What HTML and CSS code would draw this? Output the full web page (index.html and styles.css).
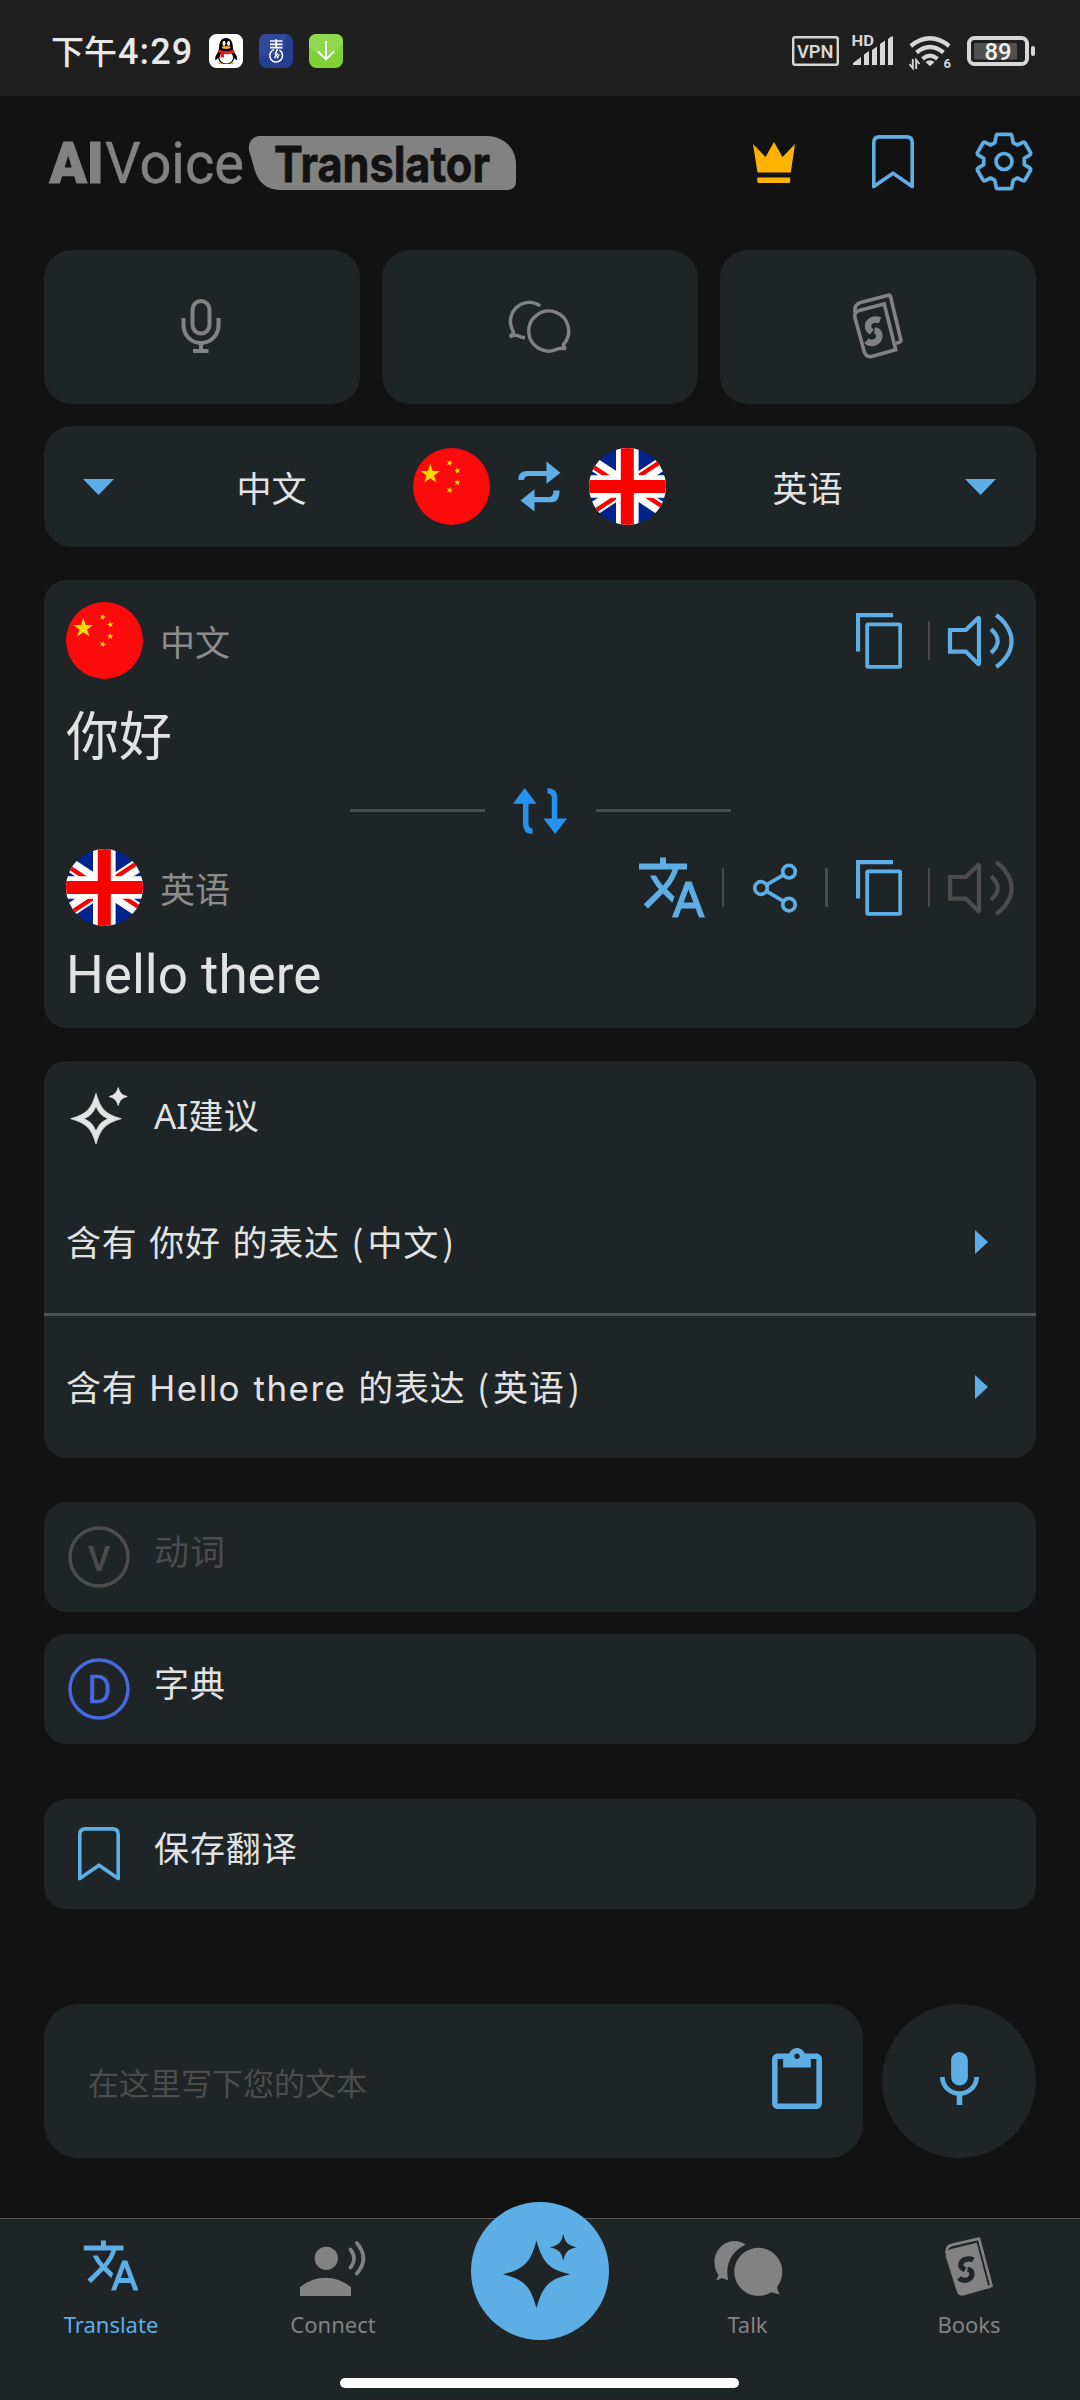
FILE: index.html
```html
<!DOCTYPE html>
<html lang="zh-CN">
<head>
<meta charset="utf-8">
<title>AI Voice Translator</title>
<link rel="stylesheet" href="styles.css">
</head>
<body>
<svg class="defs" width="0" height="0">
  <defs>
    <clipPath id="round"><circle cx="38.5" cy="38.5" r="38.5"/></clipPath>
    <polygon id="star" points="0,-10 2.25,-3.09 9.51,-3.09 3.63,1.18 5.88,8.09 0,3.82 -5.88,8.09 -3.63,1.18 -9.51,-3.09 -2.25,-3.09"/>
    <symbol id="flag-cn" viewBox="0 0 77 77">
      <circle cx="38.5" cy="38.5" r="38.5" fill="#fb0b0b"/>
      <g fill="#ffdc00">
        <use href="#star" transform="translate(17.3 26.2) scale(1.04)"/>
        <use href="#star" transform="translate(36.7 15) rotate(20) scale(.34)"/>
        <use href="#star" transform="translate(44.3 22.6) rotate(-10) scale(.34)"/>
        <use href="#star" transform="translate(44.2 34.4) scale(.34)"/>
        <use href="#star" transform="translate(36.7 42.2) rotate(20) scale(.34)"/>
      </g>
    </symbol>
    <symbol id="flag-uk" viewBox="0 0 77 77">
      <g clip-path="url(#round)" fill="none">
        <rect width="77" height="77" fill="#00248c"/>
        <path d="M-10 6.5L87 70.5M-10 70.5L87 6.5" stroke="#fff" stroke-width="13.7"/>
        <path d="M-10 9.5L38.5 41.5M38.5 35.5L87 67.5M38.5 35.5L87 3.5M-10 73.5L38.5 41.5" stroke="#fa0000" stroke-width="4.4"/>
        <path d="M38.3 0V77M0 38.5H77" stroke="#fff" stroke-width="22.6"/>
        <path d="M38.3 0V77M0 38.5H77" stroke="#fa0000" stroke-width="13"/>
      </g>
    </symbol>
    <symbol id="copy" viewBox="856 613 46 56">
      <path d="M893 615.2H858V651.5" fill="none" stroke="currentColor" stroke-width="4.2"/>
      <rect x="867.2" y="624.3" width="33" height="42.6" rx=".8" fill="none" stroke="currentColor" stroke-width="3.8"/>
    </symbol>
    <symbol id="speaker" viewBox="947 612 68 58">
      <path d="M950 630H965.8L978 618.2Q979 617.5 979 619V663Q979 664.6 978 663.8L965.8 651.6H950Z" fill="none" stroke="currentColor" stroke-width="4.2"/>
      <path d="M991 629.2Q1004.5 641 991 652.8M996.2 615Q1007 623 1010.5 634Q1014 647 1005.5 658Q1001.5 663.5 996.2 667" fill="none" stroke="currentColor" stroke-width="4.2"/>
    </symbol>
    <symbol id="bookmark" viewBox="872 135 42 54">
      <path d="M873.8 186.6V142.5Q873.8 136.9 879.5 136.9H906.5Q912.2 136.9 912.2 142.5V186.6L893 173.2Z" fill="none" stroke="currentColor" stroke-width="3.6" stroke-linejoin="round"/>
    </symbol>
    <symbol id="translate" viewBox="1 2 22 20">
      <path fill="currentColor" d="M12.87 15.07l-2.54-2.51.03-.03c1.74-1.94 2.98-4.17 3.71-6.53H17V4h-7V2H8v2H1v1.99h11.17C11.5 7.92 10.44 9.75 9 11.35 8.07 10.32 7.3 9.19 6.69 8h-2c.73 1.63 1.73 3.17 2.98 4.56l-5.09 5.02L4 19l5-5 3.11 3.11.76-2.04zM18.5 10h-2L12 22h2l1.12-3h4.75L21 22h2l-4.5-12zm-2.62 7l1.62-4.33L19.12 17h-3.24z"/>
    </symbol>
  </defs>
</svg>

<div class="screen">
  <div class="status">
    <div class="time"><span class="time-cn">下午</span><span class="time-num">4:29</span></div>
    <svg class="app" viewBox="0 0 34 34">
      <rect width="34" height="34" rx="7.5" fill="#fff"/>
      <path d="M9 29.5Q11 27 17 27Q24 27 25 29.5Q24 31 17.5 29.5Q11 31 9 29.5Z" fill="#f5a81c"/>
      <path d="M10 17Q9.5 4 17 4Q24.5 4 24 17Q29 22 28 26Q27 26.5 25.5 24Q24 30 17 30Q10.5 30 9 24Q7.5 26.5 6.3 26Q5.5 22 10 17Z"/>
      <ellipse cx="17.3" cy="23.5" rx="6.8" ry="6" fill="#fff"/>
      <path d="M9.5 15.5Q17 19 25 15.5L25.5 18.5Q20 20.8 15 20V23.5H11.5V19L8.8 18Z" fill="#e02020"/>
      <ellipse cx="15" cy="9.5" rx="1.5" ry="2.4" fill="#fff"/><ellipse cx="19.6" cy="9.5" rx="1.5" ry="2.4" fill="#fff"/>
      <ellipse cx="17.2" cy="13.5" rx="4.5" ry="1.4" fill="#f5a81c"/>
    </svg>
    <svg class="app" viewBox="0 0 34 34">
      <rect width="34" height="34" rx="7.5" fill="#263f8f"/>
      <path d="M0 21V7.5Q0 0 7.5 0H27L24 22Z" fill="#304a9a"/>
      <path d="M11 7H23.5M11 10.3H23.5M11 13.6H23.5M17.2 5.3V14.5" stroke="#fff" stroke-width="1.7"/>
      <path d="M15 15.6A6.4 6.4 0 1 0 20.5 16.2M18.5 15L16 20.5M15.5 24L18.5 19.5M18 24.5L20 20.5" fill="none" stroke="#fff" stroke-width="1.5"/>
    </svg>
    <svg class="app" viewBox="0 0 34 34">
      <rect width="34" height="34" rx="7.5" fill="#7fd135"/>
      <path d="M0 14L17 25L34 11V7.5Q34 0 26.5 0H7.5Q0 0 0 7.5Z" fill="#90d850"/>
      <path d="M17 7V25M9 17.5L17 25.5L25 17.5" fill="none" stroke="#fff" stroke-width="1.9"/>
    </svg>
    <div class="system">
      <svg width="49" height="36" viewBox="791 33 49 36">
        <rect x="793.2" y="37.2" width="44.6" height="27.6" rx="2" fill="none" stroke="#d6d6d6" stroke-width="2.4"/>
        <text x="797" y="57.8" textLength="36.5" lengthAdjust="spacingAndGlyphs" class="vpn">VPN</text>
      </svg>
      <svg class="signal" width="43" height="36" viewBox="851 33 43 36" fill="#d6d6d6">
        <text x="851.5" y="46" textLength="22.5" lengthAdjust="spacingAndGlyphs" class="hd">HD</text>
        <path d="M853 65V63L861 57V65ZM864 65V54.5L869 51V65ZM872 65V50L877 46.5V65ZM880 65V44L885 40.5V65ZM888 65V39L891 36.5H893V65Z"/>
      </svg>
      <svg class="wifi" width="44" height="36" viewBox="908 33 44 36">
        <path d="M910.8 46Q930 30.5 949.2 46M916.5 52.5Q930 41.5 943.5 52.5M922.5 58.8Q930 52.5 937.5 58.8" fill="none" stroke="#d6d6d6" stroke-width="4.2"/>
        <path d="M925.5 62Q930 58.5 934.5 62L930 66.2Z" fill="#d6d6d6"/>
        <path d="M912.8 59V68L909.5 64M916.2 69V60L919.5 64" fill="none" stroke="#d6d6d6" stroke-width="1.9"/>
        <text x="943.5" y="68" class="six">6</text>
      </svg>
      <svg class="battery" width="70" height="36" viewBox="966 33 70 36">
        <rect x="969" y="38" width="58" height="26" rx="5.5" fill="none" stroke="#d6d6d6" stroke-width="4"/>
        <rect x="974" y="43" width="43" height="16.5" rx="1.5" fill="#505050"/>
        <rect x="1031" y="46" width="4" height="10" rx="2" fill="#d6d6d6"/>
        <text x="984.5" y="60" textLength="27" lengthAdjust="spacingAndGlyphs" class="pct">89</text>
      </svg>
    </div>
  </div>

  <header class="header">
    <svg class="logo" width="470" height="58" viewBox="48 133 470 58">
      <text x="49.5" y="183.3" textLength="54" lengthAdjust="spacingAndGlyphs" class="logo-ai">AI</text>
      <text x="105" y="183.3" textLength="139" lengthAdjust="spacingAndGlyphs" class="logo-voice">Voice</text>
      <path d="M260 136H487C503 136 516 148 516 164V181Q516 190 507 190H280C266 190 258 181 255 171L249.2 151C247.5 143 252 136 260 136Z" fill="#828282"/>
      <text x="274" y="181.7" textLength="216" lengthAdjust="spacingAndGlyphs" class="logo-tr">Translator</text>
    </svg>
    <div class="actions">
      <svg width="42" height="41" viewBox="753 141 42 41"><path d="M753 143L765.5 156L774 141L782.5 156L795 143L790.8 171.5H757.5ZM757.3 176.5H790.2V180.5Q790.2 182 788.7 182H758.8Q757.3 182 757.3 180.5Z" fill="#ffb300"/></svg>
      <svg class="act-mark" width="42" height="54"><use href="#bookmark"/></svg>
      <svg class="act-gear" width="58" height="60" viewBox="-29 -29.5 58 60" fill="none" stroke="currentColor" stroke-width="3.7" stroke-linejoin="round">
        <path d="M-6.5 -27.2H6.5Q7.7 -27.2 8 -25L9.3 -18.6L13.5 -16.5L19.3 -19.3Q20.3 -19.6 21 -18.5L26.5 -8.8Q27 -7.5 26 -6.7L20.3 -3.2V3.2L26 6.7Q27 7.5 26.5 8.8L21 18.5Q20.3 19.6 19.3 19.3L13.5 16.5L9.3 18.6L8 25Q7.7 27.2 6.5 27.2H-6.5Q-7.7 27.2 -8 25L-9.3 18.6L-13.5 16.5L-19.3 19.3Q-20.3 19.6 -21 18.5L-26.5 8.8Q-27 7.5 -26 6.7L-20.3 3.2V-3.2L-26 -6.7Q-27 -7.5 -26.5 -8.8L-21 -18.5Q-20.3 -19.6 -19.3 -19.3L-13.5 -16.5L-9.3 -18.6L-8 -25Q-7.7 -27.2 -6.5 -27.2Z"/>
        <circle r="8"/>
      </svg>
    </div>
  </header>

  <main class="main">
    <div class="tiles">
      <div class="tile">
        <svg width="40" height="56" viewBox="181.5 298 40 56" fill="none" stroke="currentColor" stroke-width="4"><rect x="193" y="301" width="17" height="32.5" rx="8.5"/><path d="M184 318V325.5A17.5 17.5 0 0 0 219 325.5V318M201.5 343V351"/><path d="M193.5 351H209"/></svg>
      </div>
      <div class="tile">
        <svg width="64" height="58" viewBox="508 298.5 64 58" fill="none" stroke="currentColor" stroke-width="3.4"><path d="M541.3 307.3A19 19 0 0 0 513.5 331.5Q514.8 332.6 514 334.5L511 338.5Q516 335.5 519 337.3Q522 339 526 339.3"/><path d="M564.5 346A20 20 0 1 0 558.5 350.5Q562 349.2 566.8 350.3Q564.3 348.5 564.5 346Z"/></svg>
      </div>
      <div class="tile">
        <svg width="52" height="68" viewBox="852 292.5 52 68" fill="none" stroke="currentColor" stroke-width="3.6"><path d="M861 310.7L885.3 304.5L896.7 350.2L873.5 356.8Q867.5 358.5 865.3 352.5L855.8 317.5Q855 312.3 861 310.7Z"/><path d="M855.8 313Q855 304.5 862.5 302.8L889.5 295.7Q891 295.3 891.5 297L902 341Q902.3 342.5 897 343.8"/><path d="M881 320.7C875 318.5 868.5 321.5 869 327.5C869.2 330.5 871.5 331.3 873 332.5M875.5 331C881 331.5 881.5 337.5 878.5 341C875.5 344.3 870.5 344.2 867.5 341.2" stroke-width="6.4"/></svg>
      </div>
    </div>

    <div class="langs">
      <svg class="caret" width="31" height="16" viewBox="0 0 31 16"><path d="M0 0H31L15.5 16Z" fill="currentColor"/></svg>
      <div class="lang lang-from">中文</div>
      <svg class="flag"><use href="#flag-cn"/></svg>
      <svg class="swap" width="43" height="51" viewBox="517.5 461 43 51"><path d="M546 461.5L560 472.7L546 483.7V476H528Q524 476 523.5 480H518Q517.5 471 526.5 471H546ZM534 489.2L520 500.5L534 511.5V502.3H550.5Q559.5 502.3 559 490.5H553Q553 497 549 497H534Z" fill="currentColor"/></svg>
      <svg class="flag"><use href="#flag-uk"/></svg>
      <div class="lang lang-to">英语</div>
      <svg class="caret" width="31" height="16" viewBox="0 0 31 16"><path d="M0 0H31L15.5 16Z" fill="currentColor"/></svg>
    </div>

    <section class="card result">
      <div class="side">
        <svg class="flag"><use href="#flag-cn"/></svg>
        <span class="side-name">中文</span>
        <div class="tools">
          <svg width="46" height="56"><use href="#copy"/></svg>
          <i class="sep"></i>
          <svg class="spk" width="68" height="58"><use href="#speaker"/></svg>
        </div>
      </div>
      <p class="phrase phrase-cn">你好</p>
      <div class="flip">
        <hr class="rule">
        <svg width="54" height="46" viewBox="513.5 788 54 46" fill="#2492ee"><path d="M525.2 788L537 803.7H529V824Q529 828.3 533 828.5V834Q523.5 834 523.5 824V803.7H513.5ZM555.8 834L543.8 818.5H552.3V798Q552.3 793.7 548 793.5V788Q557.8 788 557.8 798V818.5H567.5Z"/></svg>
        <hr class="rule">
      </div>
      <div class="side">
        <svg class="flag"><use href="#flag-uk"/></svg>
        <span class="side-name">英语</span>
        <div class="tools">
          <svg class="tr" width="66" height="61"><use href="#translate"/></svg>
          <i class="sep"></i>
          <svg class="share" width="46" height="52" viewBox="752 861.7 46 52" fill="none" stroke="currentColor" stroke-width="3.7"><circle cx="761" cy="887.7" r="6.3"/><circle cx="789" cy="871.4" r="6.3"/><circle cx="789" cy="904.3" r="6.3"/><path d="M766.4 884.5L783.6 874.6M766.4 890.9L783.6 901.1"/></svg>
          <i class="sep"></i>
          <svg width="46" height="56"><use href="#copy"/></svg>
          <i class="sep"></i>
          <svg class="spk off" width="68" height="58"><use href="#speaker"/></svg>
        </div>
      </div>
      <p class="phrase phrase-en">Hello there</p>
    </section>

    <section class="card ideas">
      <div class="ideas-head">
        <svg width="58" height="58" viewBox="70 1087 58 58" fill="#e4e4e4"><path transform="translate(96 1118.7)" fill-rule="evenodd" d="M0 -25.3C4.5 -10 9 -4.5 25.3 0C9 4.5 4.5 10 0 25.3C-4.5 10 -9 4.5 -25.3 0C-9 -4.5 -4.5 -10 0 -25.3ZM0 -12.5C-3.5 -5 -5.5 -3 -12.3 0C-5.5 3 -3.5 5 0 12.5C3.5 5 5.5 3 12.3 0C5.5 -3 3.5 -5 0 -12.5Z" stroke="#e4e4e4" stroke-width=".8"/><path transform="translate(118.2 1096.6)" d="M0 -9C1.7 -3.5 3.5 -1.7 9 0C3.5 1.7 1.7 3.5 0 9C-1.7 3.5 -3.5 1.7 -9 0C-3.5 -1.7 -1.7 -3.5 0 -9Z" stroke="#e4e4e4" stroke-width=".8"/></svg>
        <h2 class="title"><span class="ai">AI</span>建议</h2>
      </div>
      <div class="idea"><span>含有 你好 的表达 <span class="paren">(</span>中<span class="paren">文</span>)</span><svg width="13" height="24" viewBox="0 0 13 24"><path d="M0 0L13 12L0 24Z" fill="currentColor"/></svg></div>
      <div class="idea idea-next"><span>含有 <span class="latin">Hello there</span> 的表达 <span class="paren">(</span>英<span class="paren">语</span>)</span><svg width="13" height="24" viewBox="0 0 13 24"><path d="M0 0L13 12L0 24Z" fill="currentColor"/></svg></div>
    </section>

    <div class="card row row-verb">
      <svg width="62" height="62" viewBox="-31 -31 62 62"><circle r="29" fill="none" stroke="#4c4c4c" stroke-width="3.4"/><text y="13.5" text-anchor="middle" class="letter letter-v">V</text></svg>
      <span class="row-text">动词</span>
    </div>
    <div class="card row row-dict">
      <svg width="62" height="62" viewBox="-31 -31 62 62"><circle r="29" fill="none" stroke="#4569df" stroke-width="3.4"/><text x=".5" y="14" text-anchor="middle" class="letter letter-d" textLength="24" lengthAdjust="spacingAndGlyphs">D</text></svg>
      <span class="row-text">字典</span>
    </div>
    <div class="card row row-save">
      <svg class="save" width="42" height="54"><use href="#bookmark"/></svg>
      <span class="row-text">保存翻译</span>
    </div>

    <div class="compose">
      <div class="field">
        <span class="hint">在这里写下您的文本</span>
        <svg width="50" height="61" viewBox="3 0 18 22"><path fill="currentColor" d="M19 2h-4.18C14.4.84 13.3 0 12 0c-1.3 0-2.4.84-2.82 2H5c-1.1 0-2 .9-2 2v16c0 1.1.9 2 2 2h14c1.1 0 2-.9 2-2V4c0-1.1-.9-2-2-2zm-7 0c.55 0 1 .45 1 1s-.45 1-1 1-1-.45-1-1 .45-1 1-1zm7 18H5V4h2v3h10V4h2v16z"/></svg>
      </div>
      <div class="mic">
        <svg width="39" height="53" viewBox="5 2 14 19"><path fill="currentColor" d="M12 14c1.66 0 2.99-1.34 2.99-3L15 5c0-1.66-1.34-3-3-3S9 3.34 9 5v6c0 1.66 1.34 3 3 3zm5.3-3c0 3-2.54 5.1-5.3 5.1S6.7 14 6.7 11H5c0 3.41 2.72 6.23 6 6.72V21h2v-3.28c3.28-.48 6-3.3 6-6.72h-1.7z"/></svg>
      </div>
    </div>
  </main>

  <nav class="nav">
    <div class="tabs">
      <div class="tab on">
        <svg width="56" height="60" viewBox="83.5 2237 56 60"><use href="#translate" x="84" y="2240" width="55" height="51"/></svg>
        <span>Translate</span>
      </div>
      <div class="tab">
        <svg width="66" height="60" viewBox="301 2237 66 60"><circle cx="327.3" cy="2258.3" r="11.6" fill="currentColor"/><path d="M301 2296V2287Q313 2277.7 326.5 2277.7Q340 2277.7 352 2287V2296Z" fill="currentColor"/><path d="M351.5 2249.5Q358.5 2258.5 351.5 2267.5M357.8 2243Q371 2258.5 357.8 2273.5" fill="none" stroke="currentColor" stroke-width="3.7" stroke-linecap="round"/></svg>
        <span>Connect</span>
      </div>
      <div class="tab-mid">
        <div class="fab">
          <svg width="76" height="76" viewBox="502.5 2233 76 76" fill="#1f2426"><path transform="translate(537 2274.3)" d="M0 -33.8C6 -12 12 -5 33.8 0C12 5 6 12 0 33.8C-6 12 -12 5 -33.8 0C-12 -5 -6 -12 0 -33.8Z"/><path transform="translate(563.8 2247.2)" d="M0 -13.5C2 -4.5 4.5 -2 13.5 0C4.5 2 2 4.5 0 13.5C-2 4.5 -4.5 2 -13.5 0C-4.5 -2 -2 -4.5 0 -13.5Z"/></svg>
        </div>
      </div>
      <div class="tab">
        <svg width="68" height="60" viewBox="713.5 2237 68 60" fill="currentColor"><path d="M746 2244.5Q741 2241 735 2241C724 2241 715 2250.5 715 2262Q715 2269.5 719 2275L717 2280.3Q720 2279.5 722.5 2278Q725 2279 728.5 2280.3Q724 2256 746 2244.5Z"/><path d="M777.8 2286.5A24 24 0 1 0 771.5 2292.2Q776 2293 780.3 2294.5Q777.5 2290 777.8 2286.5Z"/></svg>
        <span class="talk">Talk</span>
      </div>
      <div class="tab">
        <svg width="50" height="62" viewBox="944.5 2235.5 50 62"><path d="M951 2248L977.5 2241.5L990 2288.5L964 2296Q959 2297 957 2292L945.5 2256Q944.5 2250 951 2248Z" fill="currentColor"/><path d="M946.5 2252Q945.5 2244.5 953 2243.3L979.8 2237.2L992.7 2285.8L988.5 2288" fill="none" stroke="currentColor" stroke-width="2.8"/><path d="M974 2259.2C968.5 2256.5 961 2259 961 2264.5C961 2268 964 2268.5 965.5 2269.5M968 2268.8C973.5 2269.5 973.5 2275 970.5 2278.3C967.5 2281 962 2281 959.3 2277.8" fill="none" stroke="#1f2426" stroke-width="5.4"/></svg>
        <span>Books</span>
      </div>
    </div>
    <div class="home"></div>
  </nav>
</div>
</body>
</html>
```
FILE: styles.css
```css
* { box-sizing: border-box; }
body { margin: 0; background: #121212; }
svg { display: block; flex: none; overflow: visible; }
.defs { position: absolute; }

.screen {
  width: 1080px;
  height: 2400px;
  display: flex;
  flex-direction: column;
  background: #121212;
  color: #e2e2e2;
  font-family: "Noto Sans CJK SC", "Noto Sans", sans-serif;
}

/* Status bar */
.status {
  height: 96px;
  padding: 6px 44px 0 51px;
  display: flex;
  align-items: center;
  background: #1f1f1f;
}
.time {
  width: 158px;
  display: flex;
  align-items: baseline;
  line-height: 40px;
  font-weight: 500;
  color: #e8e8e8;
  white-space: nowrap;
}
.time-cn { font-size: 33px; font-weight: 500; }
.time-num { font-family: Roboto, sans-serif; font-size: 36px; letter-spacing: 1.1px; margin-left: 1px; }
.app { width: 34px; height: 34px; margin-right: 16px; }
.system { margin-left: auto; display: flex; }
.signal { margin-left: 11px; }
.wifi, .battery { margin-left: 14px; }
.vpn, .hd, .six { font-family: Roboto, sans-serif; font-weight: 700; fill: #d6d6d6; }
.vpn { font-size: 19px; font-weight: 600; }
.hd { font-size: 15.5px; }
.six { font-size: 13px; }
.pct { font-family: Roboto, sans-serif; font-size: 23.5px; font-weight: 500; fill: #f2f2f2; }

/* Header */
.header {
  height: 154px;
  padding: 0 47px 22px 48px;
  display: flex;
  align-items: center;
}
.logo-ai, .logo-voice { font-family: Roboto, sans-serif; font-size: 57px; fill: #828282; }
.logo-ai { font-weight: 900; stroke: #828282; stroke-width: 1.2px; }
.logo-voice { font-weight: 400; stroke: #828282; stroke-width: .5px; }
.logo-tr { font-family: Inter, sans-serif; font-size: 50px; font-weight: 700; fill: #121212; stroke: #121212; stroke-width: .8px; }
.actions { margin-left: auto; display: flex; align-items: center; color: #5eaee6; }
.act-mark { margin-left: 77px; }
.act-gear { margin-left: 61px; }

/* Content */
.main { padding: 0 44px; flex: 1; }
.card { background: #1f2426; border-radius: 22px; }
.tiles { display: grid; grid-template-columns: repeat(3, 316px); gap: 22px; }
.tile {
  height: 154px;
  border-radius: 28px;
  background: #1f2426;
  color: #828282;
  display: flex;
  align-items: center;
  justify-content: center;
}
.tile svg { margin: 0 1.5px 2px 0; }

.flag { width: 77px; height: 77px; }
.langs {
  height: 121px;
  margin-top: 22px;
  padding: 0 40px 0 39px;
  border-radius: 28px;
  background: #1f2426;
  display: flex;
  align-items: center;
  color: #5eaee6;
}
.lang {
  flex: 1;
  text-align: center;
  color: #e2e2e2;
  font-size: 35px;
  line-height: 50px;
}
.lang-from { padding-left: 16px; }
.lang-to { padding-right: 16px; }
.swap { margin: 0 28px; }

.result { height: 448px; margin-top: 33px; padding: 22px; display: flex; flex-direction: column; }
.side { height: 77px; display: flex; align-items: center; }
.side-name { margin: 1px 0 0 17px; font-size: 35px; line-height: 50px; color: #8c8c8c; }
.tools { margin-left: auto; display: flex; align-items: center; color: #5eaee6; }
.sep { width: 2.5px; height: 39px; background: #4a4a4a; margin: 0 17px 0 26px; }
.spk { margin-right: -1px; }
.off { color: #4c4c4c; }
.tr { margin-right: -9px; }
.share { margin: 0 1px 0 11px; }
.tools .share + .sep { margin-right: 28px; }
.phrase { margin: 0; font-weight: 400; white-space: nowrap; }
.phrase-cn { font-size: 53px; line-height: 76px; margin-top: 16px; }
.phrase-en { font-family: Roboto, sans-serif; font-size: 53px; line-height: 76px; margin-top: 11px; }
.flip { height: 46px; margin: 17px 0 15px; display: flex; align-items: center; justify-content: center; gap: 28.5px; }
.rule { width: 135px; height: 3px; margin: 0 0 2px; border: 0; background: #4c4c4c; }

.ideas { height: 397px; margin-top: 33px; }
.ideas-head { height: 110px; padding: 0 26px; display: flex; align-items: center; }
.title { margin: 0 0 2px 26px; font-size: 35px; font-weight: 400; line-height: 50px; letter-spacing: .5px; }
.ai { font-family: "Noto Sans", sans-serif; letter-spacing: 0; }
.idea {
  height: 142px;
  padding: 0 48px 2px 22px;
  display: flex;
  align-items: center;
  justify-content: space-between;
  font-size: 35px;
  line-height: 50px;
  letter-spacing: .8px;
  word-spacing: 3px;
  color: #e2e2e2;
}
.idea svg { color: #5eaee6; margin-top: 1px; }
.idea-next { height: 145px; border-top: 3px solid #505052; padding-bottom: 1px; }
.paren { letter-spacing: 4px; }
.latin { font-family: Inter, sans-serif; font-size: 35px; letter-spacing: 1.5px; word-spacing: 1px; }

.row { height: 110px; padding: 0 24px; display: flex; align-items: center; }
.row-text { margin: 0 0 14px 24px; font-size: 35px; line-height: 50px; letter-spacing: .9px; }
.row-verb { margin-top: 44px; }
.row-verb .row-text { color: #4c4c4c; }
.row-dict { margin-top: 22px; }
.row-save { margin-top: 55px; }
.save { margin: 0 10px; color: #5eaee6; }
.letter { font-family: Roboto, sans-serif; }
.letter-v { font-size: 35px; font-weight: 500; fill: #4c4c4c; }
.letter-d { font-size: 38px; font-weight: 400; fill: #4569df; stroke: #4569df; stroke-width: .5px; }

.compose { margin-top: 95px; display: flex; justify-content: space-between; color: #5eaee6; }
.field {
  width: 819px;
  height: 154px;
  border-radius: 34px;
  background: #1f2426;
  padding: 0 41px 5px 44px;
  display: flex;
  align-items: center;
  justify-content: space-between;
}
.hint { font-size: 31px; line-height: 46px; color: #4c4c4c; margin-top: 6px; font-weight: 400; }
.mic {
  width: 154px;
  height: 154px;
  padding-bottom: 5px;
  border-radius: 50%;
  background: #1f2426;
  display: flex;
  align-items: center;
  justify-content: center;
}

/* Bottom navigation */
.nav { height: 182px; border-top: 1px solid #545450; background: #1f2426; flex: none; }
.tabs { display: grid; grid-template-columns: 222px 222px 192px 222px 222px; height: 159px; }
.tab {
  padding-top: 18px;
  display: flex;
  flex-direction: column;
  align-items: center;
  color: #828282;
  font-family: "Noto Sans", sans-serif;
  font-size: 22px;
  line-height: 30px;
  font-weight: 400;
}
.tab svg { height: 60px; }
.tab span { margin-top: 12px; }
.tab .talk { margin-left: 1px; }
.on { color: #5eaee6; }
.tab-mid { display: flex; justify-content: center; }
.fab {
  width: 138px;
  height: 138px;
  margin-top: -17px;
  border-radius: 50%;
  background: #5eaee6;
  display: flex;
  align-items: center;
  justify-content: center;
}
.home { width: 399px; height: 10px; margin: 0 auto 0 340px; border-radius: 5px; background: #fff; }
```
